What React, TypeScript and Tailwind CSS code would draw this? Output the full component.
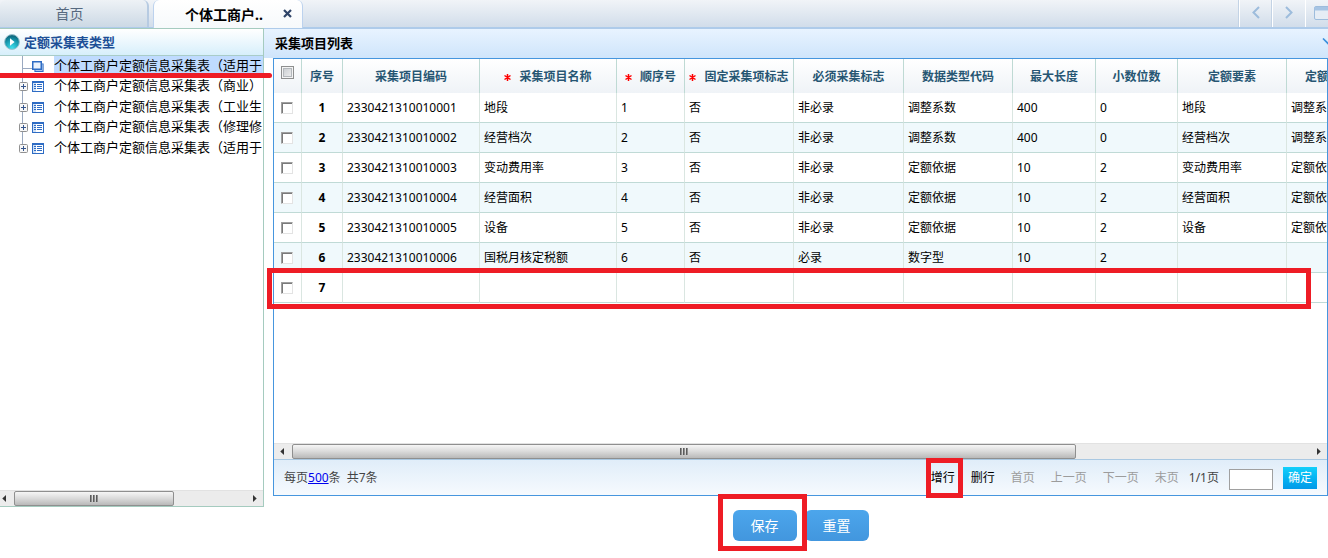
import type { ReactNode } from 'react';

type TreeItem = { label: string; selected?: boolean };

const treeItems: TreeItem[] = [
  { label: '个体工商户定额信息采集表（适用于', selected: true },
  { label: '个体工商户定额信息采集表（商业）' },
  { label: '个体工商户定额信息采集表（工业生' },
  { label: '个体工商户定额信息采集表（修理修' },
  { label: '个体工商户定额信息采集表（适用于' },
];

const columns: { title: string; required?: boolean; width: string }[] = [
  { title: '采集项目编码', width: 'w-[137px]' },
  { title: '采集项目名称', required: true, width: 'w-[137px]' },
  { title: '顺序号', required: true, width: 'w-[68px]' },
  { title: '固定采集项标志', required: true, width: 'w-[109px]' },
  { title: '必须采集标志', width: 'w-[110px]' },
  { title: '数据类型代码', width: 'w-[109px]' },
  { title: '最大长度', width: 'w-[83px]' },
  { title: '小数位数', width: 'w-[82px]' },
  { title: '定额要素', width: 'w-[109px]' },
];

const rows: string[][] = [
  ['2330421310010001', '地段', '1', '否', '非必录', '调整系数', '400', '0', '地段', '调整系数'],
  ['2330421310010002', '经营档次', '2', '否', '非必录', '调整系数', '400', '0', '经营档次', '调整系数'],
  ['2330421310010003', '变动费用率', '3', '否', '非必录', '定额依据', '10', '2', '变动费用率', '定额依据'],
  ['2330421310010004', '经营面积', '4', '否', '非必录', '定额依据', '10', '2', '经营面积', '定额依据'],
  ['2330421310010005', '设备', '5', '否', '非必录', '定额依据', '10', '2', '设备', '定额依据'],
  ['2330421310010006', '国税月核定税额', '6', '否', '必录', '数字型', '10', '2', '', ''],
  ['', '', '', '', '', '', '', '', '', ''],
];

function Arrow({ dir }: { dir: 'left' | 'right' }) {
  return (
    <svg width="4" height="7" viewBox="0 0 4 7" aria-hidden="true">
      <path d={dir === 'left' ? 'M4 0 L0.3 3.5 L4 7 Z' : 'M0 0 L3.7 3.5 L0 7 Z'} fill="#333" />
    </svg>
  );
}

function Scrollbar({ thumb, startButton }: { thumb: string; startButton: string }) {
  return (
    <div className="flex h-4 items-stretch border-t border-[#e2e2e2] bg-[#ececec]">
      <button type="button" aria-label="向左滚动" className={`flex shrink-0 items-center pb-px ${startButton}`}>
        <Arrow dir="left" />
      </button>
      <div className="min-w-0 flex-1">
        <div
          className={`flex h-[15px] items-center justify-center gap-px rounded-[2px] border border-[#8f8f8f] bg-linear-to-b from-[#f6f6f6] via-[#dadada] to-[#b9b9b9] ${thumb}`}
        >
          <span className="h-[7px] w-0.5 bg-linear-to-r from-[#444] to-[#aaa]" />
          <span className="h-[7px] w-0.5 bg-linear-to-r from-[#444] to-[#aaa]" />
          <span className="h-[7px] w-0.5 bg-linear-to-r from-[#444] to-[#aaa]" />
        </div>
      </div>
      <button type="button" aria-label="向右滚动" className="flex w-[17px] shrink-0 items-center justify-center pb-px">
        <Arrow dir="right" />
      </button>
    </div>
  );
}

function TabTool({ label, children }: { label: string; children: ReactNode }) {
  return (
    <button
      type="button"
      aria-label={label}
      className="flex h-[27px] w-[33px] items-center justify-center border-l border-white pb-0.5 shadow-[-1px_0_0_#c3d3e5]"
    >
      {children}
    </button>
  );
}

function TabBar() {
  return (
    <header className="flex h-[29px] items-stretch justify-between overflow-hidden border-b border-[#aecbea] bg-linear-to-b from-[#f1f4f8] to-[#d0dcea] shadow-[inset_0_-1px_0_#aecbea]">
      <nav className="flex gap-1">
        <button
          type="button"
          className="mb-px w-[149px] rounded-t-md border-r-2 border-[#b7cbe2] bg-linear-to-b from-[#eef2f6] to-[#ccd9e5] pr-2 text-sm leading-[27px] text-[#56697f]"
        >
          首页
        </button>
        <div className="flex w-[150px] items-center justify-between rounded-t-md border-x border-[#bcd2ee] bg-linear-to-b from-white to-[#f6f9fb] pr-2.5 pl-[31px]">
          <button type="button" className="text-sm leading-[27px] font-bold text-black">
            个体工商户..
          </button>
          <button type="button" aria-label="关闭">
            <svg width="9" height="9" viewBox="0 0 9 9" className="mb-0.5">
              <path d="M1 1 L8 8 M8 1 L1 8" stroke="#2f4468" strokeWidth="2.2" />
            </svg>
          </button>
        </div>
      </nav>
      <div className="flex w-[89px] shrink-0">
        <TabTool label="上一个标签">
          <svg width="8" height="13" viewBox="0 0 8 13">
            <path d="M7 1 L1.5 6.5 L7 12" fill="none" stroke="#9dbcdc" strokeWidth="2" />
          </svg>
        </TabTool>
        <TabTool label="下一个标签">
          <svg width="8" height="13" viewBox="0 0 8 13">
            <path d="M1 1 L6.5 6.5 L1 12" fill="none" stroke="#9dbcdc" strokeWidth="2" />
          </svg>
        </TabTool>
        <div className="flex h-[27px] w-[23px] overflow-hidden border-l border-white">
          <button type="button" aria-label="窗口" className="shrink-0 pb-0.5 pl-2">
            <svg width="18" height="14" viewBox="0 0 18 14">
              <rect x="0.5" y="0.5" width="17" height="13" rx="1.5" fill="#e6edf5" stroke="#9dbcdc" />
              <path d="M0.5 1 H17.5 V4.5 H0.5 Z" fill="#a6c4e4" />
            </svg>
          </button>
        </div>
      </div>
    </header>
  );
}

function FolderIcon() {
  return (
    <svg width="12" height="11" viewBox="0 0 12 11" className="shrink-0">
      <path d="M9.5 3 H11 V10.3 H3 V8.5" fill="none" stroke="#2e6cc4" strokeWidth="1.2" />
      <path d="M3.5 9 H10 V3" fill="none" stroke="#8fb4e6" />
      <rect x="0.75" y="0.75" width="8.5" height="7.5" fill="#eaf2fc" stroke="#2e6cc4" strokeWidth="1.5" />
    </svg>
  );
}

function ListIcon() {
  return (
    <svg width="12" height="11" viewBox="0 0 12 11" className="shrink-0">
      <rect x="0.5" y="0.5" width="11" height="10" fill="#fff" stroke="#2e6cc4" />
      <path d="M0 1 H12" stroke="#2e6cc4" strokeWidth="2" />
      <path d="M1 2 H4 V10 H1 Z" fill="#cfe0f5" />
      <path d="M2 3.5 H4 M2 5.5 H4 M2 7.5 H4 M5 3.5 H10 M5 5.5 H10 M5 7.5 H10" stroke="#2e6cc4" />
    </svg>
  );
}

function PlusIcon() {
  return (
    <svg width="9" height="9" viewBox="0 0 9 9">
      <rect x="0.5" y="0.5" width="8" height="8" rx="1" fill="#f7f7f7" stroke="#919191" />
      <path d="M2 4.5 H7 M4.5 2 V7" stroke="#35558c" />
    </svg>
  );
}

function TreeRow({ item, last }: { item: TreeItem; last: boolean }) {
  return (
    <li className="relative flex items-center odd:h-5 even:h-[21px]">
      <div className="relative flex h-full w-8 shrink-0 items-center pl-[19px]">
        <span className={`absolute top-0 left-[22px] w-px bg-[#9aa9c0] ${last ? 'h-1/2' : 'h-full'}`} />
        {item.selected ? (
          <span className="absolute top-3 left-[22px] h-px w-2.5 bg-[#9aa9c0]" />
        ) : (
          <button type="button" aria-label="展开" className="relative">
            <PlusIcon />
          </button>
        )}
      </div>
      <div className="w-[22px] shrink-0">{item.selected ? <FolderIcon /> : <ListIcon />}</div>
      <a
        href="#"
        className={`h-full min-w-0 flex-1 overflow-hidden text-[13px] leading-[18px] whitespace-nowrap text-black ${item.selected ? 'bg-[#bfdbff]' : ''}`}
      >
        {item.label}
      </a>
      {item.selected && <span className="absolute top-[17px] left-0 z-10 h-[5px] w-[272px] rounded-r-sm bg-[#ee1c25]" />}
    </li>
  );
}

function Sidebar() {
  return (
    <aside className="-mt-px flex h-[479px] w-[264px] shrink-0 flex-col border-t border-r border-b border-[#a5cbbf]">
      <h2 className="flex h-[27px] items-center gap-1 border-b border-[#a9ccc8] bg-linear-to-b from-white to-[#d7effb] pl-1 text-[13px] font-bold text-[#1d4f97]">
        <svg width="16" height="16" viewBox="0 0 16 16" aria-hidden="true">
          <defs>
            <radialGradient id="orb" cx="0.5" cy="0.9" r="0.9">
              <stop offset="0" stopColor="#3fe0ee" />
              <stop offset="0.6" stopColor="#1596ac" />
              <stop offset="1" stopColor="#0b5a70" />
            </radialGradient>
          </defs>
          <circle cx="8" cy="8" r="7.4" fill="url(#orb)" stroke="#9cc4d0" />
          <path d="M6 4.2 L10.6 8 L6 11.8 Z" fill="#fff" />
        </svg>
        <span className="pt-px">定额采集表类型</span>
      </h2>
      <ul className="flex-1">
        {treeItems.map((item, i) => (
          <TreeRow key={i} item={item} last={i === treeItems.length - 1} />
        ))}
      </ul>
      <Scrollbar thumb="w-40" startButton="w-3.5 pl-0.5" />
    </aside>
  );
}

const thBase =
  'h-[34px] border-r border-[#bfdad4] bg-linear-to-b from-white to-[#eff3f7] px-0 pt-0.5 pb-0 text-center font-bold text-[#275673]';
const tdBase = 'h-[30px] border-r border-b border-r-[#dae6e1] border-b-[#c0dad6] py-0 pr-0';

function ItemTable() {
  return (
    <table className="w-[1122px] table-fixed border-separate border-spacing-0 text-xs leading-4 whitespace-nowrap text-black">
      <thead>
        <tr>
          <th className={`${thBase} w-7 align-top`}>
            <input
              type="checkbox"
              aria-label="全选"
              className="mt-[5px] ml-[7px] block size-[13px] appearance-none border border-[#8e8f8f] bg-linear-to-br from-[#c4c8cc] to-[#f4f4f4] shadow-[inset_0_0_0_1px_#f4f4f4,inset_0_0_0_2px_#b4b8bc]"
            />
          </th>
          <th className={`${thBase} w-[41px]`}>序号</th>
          {columns.map((c) => (
            <th key={c.title} className={`${thBase} ${c.width}`}>
              {c.required ? (
                <span className="flex items-center justify-center gap-2">
                  <svg width="7" height="7" viewBox="0 0 7 7" aria-label="必填">
                    <path d="M3.5 0 V7 M0.5 1.5 L6.5 5.5 M6.5 1.5 L0.5 5.5" stroke="#f00" strokeWidth="1.5" />
                  </svg>
                  {c.title}
                </span>
              ) : (
                c.title
              )}
            </th>
          ))}
          <th className={`${thBase} w-[109px]`}>
            <span className="block pl-[18px] text-left">定额</span>
          </th>
        </tr>
      </thead>
      <tbody>
        {rows.map((cells, i) => (
          <tr key={i} className="even:bg-[#f0f9fc]">
            <td className={`${tdBase} pl-[7px]`}>
              <input
                type="checkbox"
                aria-label={`选择第${i + 1}行`}
                className="block size-3 appearance-none border border-t-[#a0a0a0] border-r-[#e3e3e3] border-b-[#e3e3e3] border-l-[#a0a0a0] bg-white shadow-[inset_1px_1px_0_#7a7a7a]"
              />
            </td>
            <td className={`${tdBase} pl-0 text-center font-bold`}>{i + 1}</td>
            {cells.map((cell, j) => (
              <td key={j} className={`${tdBase} pl-1`}>
                {cell}
              </td>
            ))}
          </tr>
        ))}
      </tbody>
    </table>
  );
}

function Pager() {
  return (
    <footer className="flex h-9 items-center justify-between border-t border-[#a9c8e2] bg-linear-to-b from-[#e0edf9] to-[#f6fafe] px-2.5 text-xs whitespace-nowrap text-[#444]">
      <p className="flex gap-1.5">
        <span>
          每页
          <a href="#" className="text-[#0000ee] underline">
            500
          </a>
          条
        </span>
        <span>共7条</span>
      </p>
      <div className="flex items-center gap-4">
        <button type="button" className="relative text-black">
          增行
          <span className="absolute -inset-y-3 -right-2 -left-[5px] border-5 border-[#ee1c25]" />
        </button>
        <button type="button" className="text-black">删行</button>
        <button type="button" className="text-[#9c9c9c]">首页</button>
        <button type="button" className="text-[#9c9c9c]">上一页</button>
        <button type="button" className="text-[#9c9c9c]">下一页</button>
        <div className="flex items-center gap-2.5">
          <button type="button" className="text-[#9c9c9c]">末页</button>
          <span>1/1页</span>
          <input type="text" aria-label="页码" className="mt-1 h-[21px] w-11 border border-[#a0a0a0] bg-white" />
          <button type="button" className="h-[22px] w-[34px] bg-linear-to-b from-[#12cffb] to-[#0299e8] text-white">
            确定
          </button>
        </div>
      </div>
    </footer>
  );
}

function Main() {
  return (
    <main className="min-w-0 flex-1">
      <div className="flex h-[29px] items-center justify-between overflow-hidden bg-linear-to-b from-[#e8f3ff] to-[#cfe5fb] pl-[11px]">
        <h1 className="text-[13px] font-bold text-black">采集项目列表</h1>
        <div className="w-1.5 overflow-hidden">
          <svg width="12" height="7" viewBox="0 0 12 7" className="mb-1 max-w-none">
            <path d="M1 0.5 L6 5.5 L11 0.5" fill="none" stroke="#3b8fdd" strokeWidth="1.6" />
          </svg>
        </div>
      </div>
      <div className="pl-[9px]">
        <section className="relative border border-[#4696de]">
          <div className="h-96 overflow-hidden">
            <ItemTable />
          </div>
          <span className="pointer-events-none absolute top-[209px] right-4 -left-[7px] h-[41px] border-5 border-[#ee1c25]" />
          <Scrollbar thumb="w-[77%]" startButton="w-[18px] pl-1.5" />
          <Pager />
        </section>
        <div className="mt-3.5 flex justify-center gap-2 text-sm">
          <button type="button" className="relative h-[31px] w-16 rounded-md bg-linear-to-b from-[#4ca6ec] to-[#4296de] text-white">
            保存
            <span className="absolute -top-4 -right-2.5 -bottom-2.5 -left-[15px] z-10 border-5 border-[#ee1c25]" />
          </button>
          <button type="button" className="h-[31px] w-16 rounded-md bg-linear-to-b from-[#4ca6ec] to-[#4296de] text-white">
            重置
          </button>
        </div>
      </div>
    </main>
  );
}

export default function App() {
  return (
    <div className="min-h-screen bg-white font-['Noto_Sans','Noto_Sans_CJK_SC',sans-serif]">
      <TabBar />
      <div className="flex items-start">
        <Sidebar />
        <Main />
      </div>
    </div>
  );
}
